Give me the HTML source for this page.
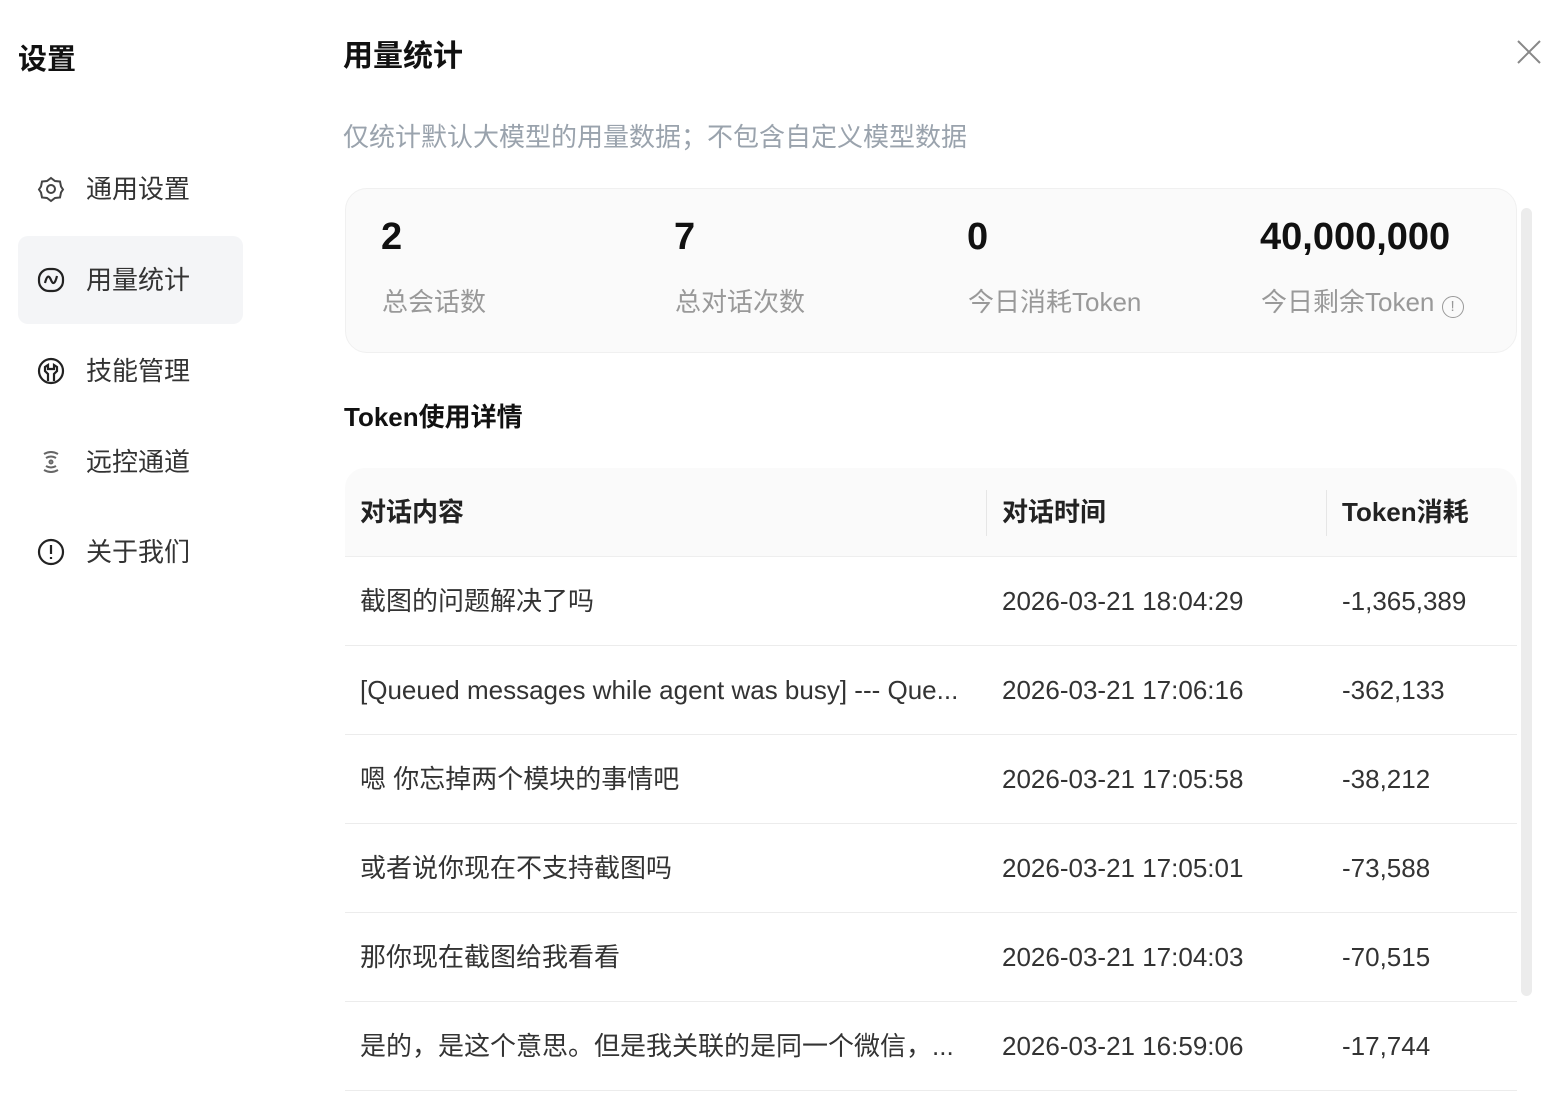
<!DOCTYPE html>
<html><head><meta charset="utf-8"><style>
*{margin:0;padding:0;box-sizing:border-box}
body{width:1568px;height:1110px;background:#fff;font-family:"Liberation Sans","Noto Sans CJK SC",sans-serif;color:#222;position:relative;overflow:hidden}
.a{position:absolute;white-space:nowrap;line-height:32px}
.nav{position:absolute;left:36px;font-size:26px;line-height:32px;color:#333;display:flex;align-items:center;gap:20px}
.nav svg{width:30px;height:30px}
.row{position:absolute;left:345px;width:1172px;height:89px;border-bottom:1px solid #ececec;font-size:26px;color:#333}
.row span{position:absolute;top:28px;line-height:32px;white-space:nowrap}
</style></head><body>
<div class="a" style="left:18px;top:44px;font-size:29px;font-weight:bold;color:#111">设置</div>
<div class="a" style="left:343px;top:41px;font-size:30px;font-weight:bold;color:#111">用量统计</div>
<svg class="a" style="left:1515px;top:38px" width="28" height="28" viewBox="0 0 28 28"><path d="M3 3L25 25M25 3L3 25" stroke="#888" stroke-width="2"/></svg>
<div class="a" style="left:343px;top:121px;font-size:26px;color:#9aa3ad">仅统计默认大模型的用量数据；不包含自定义模型数据</div>

<div class="a" style="left:18px;top:236px;width:225px;height:88px;background:#f4f5f7;border-radius:10px"></div>
<div class="nav" style="top:173px"><svg viewBox="0 0 30 30" fill="none" stroke="#444" stroke-width="2"><path d="M15 4l4 3 5 .5 1 5 2 3-2 3-1 5-5 .5-4 3-4-3-5-.5-1-5-2-3 2-3 1-5 5-.5z"/><circle cx="15" cy="15" r="4"/></svg>通用设置</div>
<div class="nav" style="top:264px"><svg viewBox="0 0 30 30" fill="none" stroke="#222" stroke-width="2.2"><rect x="3" y="4" width="24" height="22" rx="10"/><path d="M9 18c2-8 4-8 6-3s4 4 6-4"/></svg>用量统计</div>
<div class="nav" style="top:355px"><svg viewBox="0 0 30 30" fill="none" stroke="#222" stroke-width="2.2"><circle cx="15" cy="15" r="12"/><path d="M12 25v-7l-3-3v-4l3-2v4h6v-4l3 2v4l-3 3v7"/></svg>技能管理</div>
<div class="nav" style="top:446px"><svg viewBox="0 0 30 30" fill="none" stroke="#666" stroke-width="2"><path d="M8 7q7-4 14 0M10 11q5-3 10 0M10 19q5 3 10 0M8 23q7 4 14 0"/><circle cx="15" cy="15" r="1.5"/></svg>远控通道</div>
<div class="nav" style="top:536px"><svg viewBox="0 0 30 30" fill="none" stroke="#222" stroke-width="2.2"><circle cx="15" cy="15" r="12"/><path d="M15 8v9M15 20v2"/></svg>关于我们</div>

<div class="a" style="left:345px;top:188px;width:1172px;height:165px;background:#fafafa;border:1px solid #f0f0f0;border-radius:22px"></div>
<div class="a" style="left:381px;top:221px;font-size:38px;font-weight:bold;color:#111">2</div>
<div class="a" style="left:674px;top:221px;font-size:38px;font-weight:bold;color:#111">7</div>
<div class="a" style="left:967px;top:221px;font-size:38px;font-weight:bold;color:#111">0</div>
<div class="a" style="left:1260px;top:221px;font-size:38px;font-weight:bold;color:#111">40,000,000</div>
<div class="a" style="left:382px;top:286px;font-size:26px;color:#999">总会话数</div>
<div class="a" style="left:675px;top:286px;font-size:26px;color:#999">总对话次数</div>
<div class="a" style="left:968px;top:286px;font-size:26px;color:#999">今日消耗Token</div>
<div class="a" style="left:1261px;top:286px;font-size:26px;color:#999">今日剩余Token <span style="display:inline-block;width:22px;height:22px;border:1.5px solid #999;border-radius:50%;font-size:15px;text-align:center;line-height:19px;vertical-align:0">!</span></div>

<div class="a" style="left:344px;top:401px;font-size:26px;font-weight:bold;color:#111">Token使用详情</div>

<div class="a" style="left:345px;top:468px;width:1172px;height:89px;background:#fafafa;border-radius:20px 20px 0 0;border-bottom:1px solid #eee"></div>
<div class="a" style="left:986px;top:490px;width:1px;height:46px;background:#e6e6e6"></div>
<div class="a" style="left:1326px;top:490px;width:1px;height:46px;background:#e6e6e6"></div>
<div class="a" style="left:360px;top:496px;font-size:26px;font-weight:bold;color:#222">对话内容</div>
<div class="a" style="left:1002px;top:496px;font-size:26px;font-weight:bold;color:#222">对话时间</div>
<div class="a" style="left:1342px;top:496px;font-size:26px;font-weight:bold;color:#222">Token消耗</div>

<div class="row" style="top:557px"><span style="left:15px">截图的问题解决了吗</span><span style="left:657px">2026-03-21 18:04:29</span><span style="left:997px">-1,365,389</span></div>
<div class="row" style="top:646px"><span style="left:15px">[Queued messages while agent was busy] --- Que...</span><span style="left:657px">2026-03-21 17:06:16</span><span style="left:997px">-362,133</span></div>
<div class="row" style="top:735px"><span style="left:15px">嗯 你忘掉两个模块的事情吧</span><span style="left:657px">2026-03-21 17:05:58</span><span style="left:997px">-38,212</span></div>
<div class="row" style="top:824px"><span style="left:15px">或者说你现在不支持截图吗</span><span style="left:657px">2026-03-21 17:05:01</span><span style="left:997px">-73,588</span></div>
<div class="row" style="top:913px"><span style="left:15px">那你现在截图给我看看</span><span style="left:657px">2026-03-21 17:04:03</span><span style="left:997px">-70,515</span></div>
<div class="row" style="top:1002px"><span style="left:15px">是的，是这个意思。但是我关联的是同一个微信，...</span><span style="left:657px">2026-03-21 16:59:06</span><span style="left:997px">-17,744</span></div>

<div class="a" style="left:1521px;top:208px;width:11px;height:788px;background:#ececec;border-radius:6px"></div>
</body></html>
